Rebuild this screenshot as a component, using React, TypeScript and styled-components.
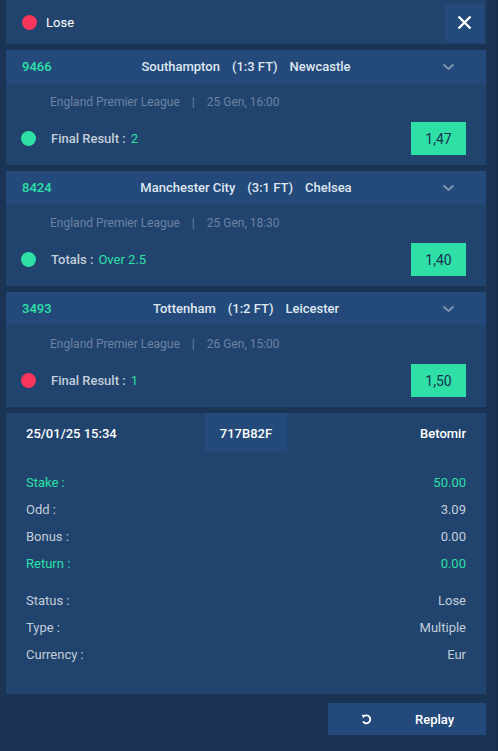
import React from "react";
import styled, { createGlobalStyle } from "styled-components";

const Global = createGlobalStyle`
  html, body { margin: 0; padding: 0; background: #1b3456; }
  body { font-family: Roboto, "Liberation Sans", Arial, sans-serif; }
  * { box-sizing: border-box; }
`;

const C = {
  bg: "#1b3456",
  panel: "#21446e",
  head: "#234a7b",
  green: "#2ee0a6",
  red: "#f8365c",
  light: "#c3cdda",
  meta: "#6b82a2",
  white: "#ffffff",
};

const Page = styled.div`
  width: 498px;
  min-height: 751px;
  padding: 0 10px 0 6px;
  border-right: 2px solid #172e4c;
  display: flex;
  flex-direction: column;
  gap: 6px;
`;

const TopBar = styled.div`
  height: 44px;
  background: ${C.panel};
  display: flex;
  align-items: center;
  padding: 1px 2px 0 16px;
  gap: 9px;
`;

const Dot = styled.span<{ $color: string }>`
  width: 15px;
  height: 15px;
  border-radius: 50%;
  background: ${(p) => p.$color};
  flex: none;
`;

const TopLabel = styled.span`
  color: ${C.white};
  font-size: 13px;
  flex: 1;
`;

const CloseButton = styled.button`
  width: 39px;
  height: 39px;
  border: none;
  background: ${C.head};
  display: flex;
  align-items: center;
  justify-content: center;
  padding: 0;
`;

const Card = styled.div`
  background: ${C.panel};
  display: flex;
  flex-direction: column;
`;

const CardHeader = styled.div`
  height: 33px;
  background: ${C.head};
  display: grid;
  grid-template-columns: 1fr auto 1fr;
  align-items: center;
  padding: 0 16px;
`;

const MatchId = styled.span`
  color: ${C.green};
  font-size: 13px;
  font-weight: 500;
`;

const Teams = styled.span`
  color: #dfe6ef;
  font-size: 13px;
  font-weight: 500;
  display: flex;
  gap: 12px;
`;

const Chevron = styled.span`
  justify-self: end;
  display: flex;
  margin-right: 15px;
`;

const CardBody = styled.div`
  padding: 11px 20px 10px 15px;
  display: flex;
  flex-direction: column;
  gap: 12px;
`;

const Meta = styled.div`
  color: ${C.meta};
  font-size: 12px;
  line-height: 16px;
  padding-left: 29px;
  display: flex;
  gap: 12px;
`;

const ResultRow = styled.div`
  display: flex;
  align-items: center;
  gap: 15px;
`;

const ResultLabel = styled.span`
  flex: 1;
  color: ${C.light};
  font-size: 13px;
  font-weight: 500;
  & b {
    color: ${C.green};
    font-weight: 400;
    margin-left: 5px;
  }
`;

const Odds = styled.span`
  width: 55px;
  height: 33px;
  background: ${C.green};
  color: #17324f;
  font-size: 14px;
  display: flex;
  align-items: center;
  justify-content: center;
`;

const Summary = styled.div`
  background: ${C.panel};
  padding: 0 20px 26px 20px;
  display: flex;
  flex-direction: column;
`;

const SummaryTop = styled.div`
  height: 40px;
  display: grid;
  grid-template-columns: 1fr auto 1fr;
  align-items: center;
  color: ${C.white};
  font-size: 13px;
  font-weight: 500;
  margin-bottom: 16px;
`;

const TicketId = styled.span`
  background: ${C.head};
  height: 40px;
  width: 82px;
  display: flex;
  align-items: center;
  justify-content: center;
`;

const Right = styled.span`
  justify-self: end;
`;

const Group = styled.div<{ $gap?: number }>`
  display: flex;
  flex-direction: column;
  margin-top: ${(p) => p.$gap ?? 0}px;
`;

const InfoRow = styled.div<{ $accent?: boolean }>`
  height: 27px;
  display: flex;
  align-items: center;
  justify-content: space-between;
  font-size: 13px;
  color: ${(p) => (p.$accent ? C.green : C.light)};
`;

const Footer = styled.div`
  display: flex;
  justify-content: flex-end;
  padding-top: 3px;
`;

const ReplayButton = styled.button`
  width: 158px;
  height: 32px;
  border: none;
  background: ${C.head};
  color: ${C.white};
  font-family: inherit;
  font-size: 13px;
  font-weight: 500;
  display: flex;
  align-items: center;
  padding: 0 0 0 33px;
  gap: 43px;
`;

const matches = [
  { id: "9466", home: "Southampton", score: "(1:3 FT)", away: "Newcastle", date: "25 Gen, 16:00", win: true, label: "Final Result :", pick: "2", odd: "1,47" },
  { id: "8424", home: "Manchester City", score: "(3:1 FT)", away: "Chelsea", date: "25 Gen, 18:30", win: true, label: "Totals :", pick: "Over 2.5", odd: "1,40" },
  { id: "3493", home: "Tottenham", score: "(1:2 FT)", away: "Leicester", date: "26 Gen, 15:00", win: false, label: "Final Result :", pick: "1", odd: "1,50" },
];

const ChevronIcon = () => (
  <svg width="13" height="8" viewBox="0 0 13 8">
    <path d="M1.5 1.5 L6.5 6 L11.5 1.5" fill="none" stroke="#7f93b0" strokeWidth="2" />
  </svg>
);

export default function App() {
  return (
    <>
      <Global />
      <Page>
        <TopBar>
          <Dot $color={C.red} />
          <TopLabel>Lose</TopLabel>
          <CloseButton aria-label="close">
            <svg width="15" height="15" viewBox="0 0 15 15">
              <path d="M1.5 1.5 L13.5 13.5 M13.5 1.5 L1.5 13.5" stroke="#fff" strokeWidth="2.4" />
            </svg>
          </CloseButton>
        </TopBar>
        {matches.map((m) => (
          <Card key={m.id}>
            <CardHeader>
              <MatchId>{m.id}</MatchId>
              <Teams>
                <span>{m.home}</span>
                <span>{m.score}</span>
                <span>{m.away}</span>
              </Teams>
              <Chevron>
                <ChevronIcon />
              </Chevron>
            </CardHeader>
            <CardBody>
              <Meta>
                <span>England Premier League</span>
                <span>|</span>
                <span>{m.date}</span>
              </Meta>
              <ResultRow>
                <Dot $color={m.win ? C.green : C.red} />
                <ResultLabel>
                  {m.label}
                  <b>{m.pick}</b>
                </ResultLabel>
                <Odds>{m.odd}</Odds>
              </ResultRow>
            </CardBody>
          </Card>
        ))}
        <Summary>
          <SummaryTop>
            <span>25/01/25 15:34</span>
            <TicketId>717B82F</TicketId>
            <Right>Betomir</Right>
          </SummaryTop>
          <Group>
            <InfoRow $accent><span>Stake :</span><span>50.00</span></InfoRow>
            <InfoRow><span>Odd :</span><span>3.09</span></InfoRow>
            <InfoRow><span>Bonus :</span><span>0.00</span></InfoRow>
            <InfoRow $accent><span>Return :</span><span>0.00</span></InfoRow>
          </Group>
          <Group $gap={10}>
            <InfoRow><span>Status :</span><span>Lose</span></InfoRow>
            <InfoRow><span>Type :</span><span>Multiple</span></InfoRow>
            <InfoRow><span>Currency :</span><span>Eur</span></InfoRow>
          </Group>
        </Summary>
        <Footer>
          <ReplayButton>
            <svg width="11" height="11" viewBox="0 0 12 12">
              <path d="M3 2.6 A4.3 4.3 0 1 1 2.2 8.2" fill="none" stroke="#fff" strokeWidth="2" />
              <path d="M0.8 0.8 L4.6 1.2 L2.4 4.6 Z" fill="#fff" />
            </svg>
            <span>Replay</span>
          </ReplayButton>
        </Footer>
      </Page>
    </>
  );
}
